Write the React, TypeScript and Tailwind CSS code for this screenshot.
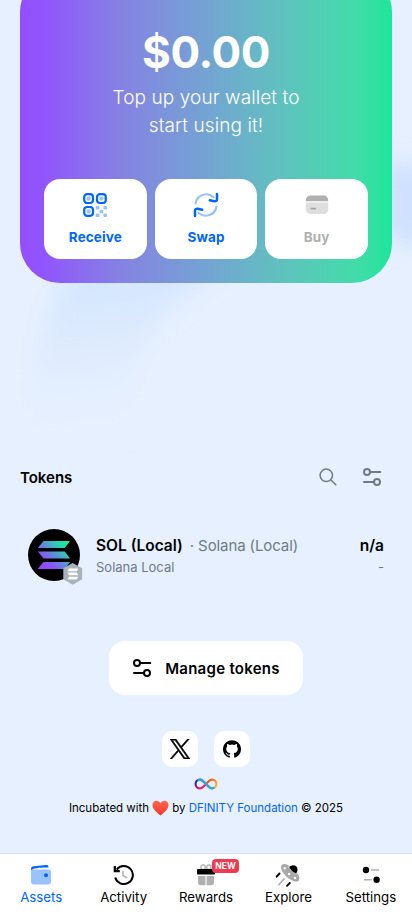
import React from "react";

const QrIcon = () => (
  <svg width="24" height="24" viewBox="0 0 24 24" fill="none">
    {[
      [1.2, 1.2],
      [14, 1.2],
      [1.2, 14],
    ].map(([x, y]) => (
      <g key={`${x}-${y}`}>
        <rect x={x} y={y} width="8.8" height="8.8" rx="3" stroke="#0066ff" strokeWidth="2.2" />
        <rect x={x + 2.4} y={y + 2.4} width="4" height="4" rx="1" fill="#99c2ff" />
      </g>
    ))}
    {[
      [12.8, 13],
      [20.4, 13],
      [16.6, 16.8],
      [12.8, 20.4],
      [20.4, 20.4],
    ].map(([x, y]) => (
      <rect key={`${x}-${y}`} x={x} y={y} width="3.6" height="3.6" rx="0.9" fill="#99c2ff" />
    ))}
  </svg>
);

const SwapIcon = () => (
  <svg width="26" height="26" viewBox="0 0 26 26" fill="none" strokeLinecap="round" strokeLinejoin="round" strokeWidth="2.2">
    <path d="M2.500 11.500A10.800 10.800 0 0 1 20.500 5.200" stroke="#99c2ff" />
    <path d="M23.500 14.500A10.800 10.800 0 0 1 5.500 20.800" stroke="#99c2ff" />
    <path d="M24 2v5q0 2.600-2.600 2.300l-4.600-1" stroke="#0066ff" strokeWidth="2.500" />
    <path d="M2 24v-5q0-2.600 2.600-2.300l4.600 1" stroke="#0066ff" strokeWidth="2.500" />
  </svg>
);

const CardIcon = () => (
  <svg width="24" height="20" viewBox="0 0 24 20">
    <path d="M.8 7.4h22.4v7.2a4.4 4.4 0 0 1-4.4 4.4H5.2a4.4 4.4 0 0 1-4.4-4.4z" fill="#dedede" />
    <path d="M.8 6.2V5A4.4 4.4 0 0 1 5.2.6h13.6A4.4 4.4 0 0 1 23.2 5v1.2z" fill="#b0b0b0" />
    <rect x="5.5" y="12.8" width="5.5" height="1.7" rx=".8" fill="#a3a3a3" />
  </svg>
);

const SlidersIcon = ({ className }: { className?: string }) => (
  <svg className={className} width="20" height="20" viewBox="0 0 20 20" fill="none" stroke="currentColor" strokeWidth="2" strokeLinecap="round">
    <circle cx="5" cy="5" r="3" />
    <path d="M8.5 5H18.3M2 15h9.5" />
    <circle cx="15" cy="15" r="3" />
  </svg>
);

const SearchIcon = () => (
  <svg width="18" height="18" viewBox="0 0 18 18" fill="none" stroke="#6d7b87" strokeWidth="1.5" strokeLinecap="round">
    <circle cx="7.3" cy="7.3" r="6.2" />
    <path d="m12 12 4.8 4.8" />
  </svg>
);

const SolanaToken = () => (
  <svg width="56" height="57" viewBox="0 0 56 57">
    <defs>
      <linearGradient id="sol" x1="12" y1="40" x2="40" y2="12" gradientUnits="userSpaceOnUse">
        <stop offset="0" stopColor="#9b42ff" />
        <stop offset=".28" stopColor="#8a55f4" />
        <stop offset=".55" stopColor="#5497d5" />
        <stop offset=".78" stopColor="#2bd5ad" />
        <stop offset="1" stopColor="#13f19a" />
      </linearGradient>
    </defs>
    <circle cx="26" cy="26" r="26" fill="#000" />
    <path
      d="M15.5 12H42l-5.2 6.9H9.8zM9.8 22.5h27l5.2 7H15.5zM15.5 33.1H42L36.8 40h-27z"
      fill="url(#sol)"
    />
    <path d="m44.700 34 9.400 5.300v11l-9.400 5.400-9.400-5.400v-11z" fill="#a9b2b9" />
    <path d="M41 39.500h9.400l-1.700 2.700h-9.300zM39.400 43.600h9.300l1.700 2.700H41zM41 47.700h9.400l-1.700 2.700h-9.300z" fill="#fff" />
  </svg>
);

const XIcon = () => (
  <svg width="20" height="20" viewBox="0 0 24 24">
    <path d="M14.258 10.152 23.176 0h-2.113l-7.747 8.813L7.133 0H0l9.352 13.328L0 23.973h2.113l8.176-9.309 6.531 9.309h7.133zm-2.895 3.293-.949-1.328L2.875 1.56h3.246l6.086 8.523.945 1.328 7.91 11.078h-3.246z" fill="#000" stroke="#000" strokeWidth=".7" />
  </svg>
);

const GithubIcon = () => (
  <svg width="18" height="18" viewBox="0 0 24 24">
    <path d="M12 .3a12 12 0 0 0-3.8 23.38c.6.12.83-.26.83-.57v-2.23c-3.34.73-4.04-1.42-4.04-1.42-.55-1.38-1.34-1.75-1.34-1.75-1.08-.74.09-.73.09-.73 1.2.09 1.84 1.24 1.84 1.24 1.07 1.83 2.81 1.3 3.5 1 .1-.78.42-1.31.76-1.61-2.67-.3-5.47-1.33-5.47-5.93 0-1.31.47-2.38 1.24-3.22-.14-.3-.54-1.52.1-3.18 0 0 1-.32 3.3 1.23a11.5 11.5 0 0 1 6 0c2.28-1.55 3.29-1.23 3.29-1.23.64 1.66.24 2.88.12 3.18a4.65 4.65 0 0 1 1.23 3.22c0 4.61-2.8 5.63-5.48 5.92.42.36.81 1.1.81 2.22v3.29c0 .31.21.69.82.57A12 12 0 0 0 12 .3" fill="#000" />
  </svg>
);

const InfinityLogo = () => (
  <svg width="24" height="12" viewBox="0 0 24 12" fill="none" strokeWidth="2.2" strokeLinecap="round">
    <defs>
      <linearGradient id="infLeft" x1="1" y1="3" x2="11" y2="9" gradientUnits="userSpaceOnUse">
        <stop offset=".2" stopColor="#522785" />
        <stop offset=".65" stopColor="#ed1e79" />
      </linearGradient>
      <linearGradient id="infRight" x1="13" y1="3" x2="23" y2="9" gradientUnits="userSpaceOnUse">
        <stop offset=".2" stopColor="#f15a24" />
        <stop offset=".9" stopColor="#fbb03b" />
      </linearGradient>
    </defs>
    <path d="M12 6C9.4 3 8 1.6 6 1.6A4.4 4.4 0 0 0 6 10.4C8 10.4 9.4 9 12 6" stroke="url(#infLeft)" />
    <path d="M12 6C14.6 3 16 1.6 18 1.6A4.4 4.4 0 0 1 18 10.4C16 10.4 14.6 9 12 6" stroke="url(#infRight)" />
    <path d="M4.500 2C7.500.900 9.300 3 12 6c2.700 3 4.500 5.100 7.500 4" stroke="#29abe2" />
  </svg>
);

const Heart = () => (
  <svg className="mx-[3px]" width="17" height="16" viewBox="0 0 17 16">
    <defs>
      <linearGradient id="heart" x1="0" y1="0" x2="0" y2="1">
        <stop offset="0" stopColor="#ff6550" />
        <stop offset="1" stopColor="#f23a2c" />
      </linearGradient>
    </defs>
    <path d="M8.5 15.5C5 12.8.5 9.2.5 5 .5 2.3 2.2.7 4.4.7c1.8 0 3.3.9 4.1 2.5C9.3 1.600 10.800.7 12.600.7c2.200 0 3.900 1.600 3.900 4.300 0 4.200-4.500 7.800-8 10.500z" fill="url(#heart)" />
  </svg>
);

const WalletIcon = () => (
  <svg width="22" height="22" viewBox="0 0 22 22">
    <path d="M1 6.400l2-.9h15.500A2.500 2.500 0 0 1 21 8v9.500a3 3 0 0 1-3 3H4a3 3 0 0 1-3-3z" fill="#99c2ff" />
    <path d="M1 6.200V5C1 3.200 2 2.500 3.700 2.300L16 1c1.500-.1 2.300.5 2.500 1.900v.7C12 3.600 5 3.600 1 6.200z" fill="#0066ff" />
    <circle cx="16" cy="11.300" r="2" fill="#0066ff" />
  </svg>
);

const HistoryIcon = () => (
  <svg width="22" height="22" viewBox="0 0 22 22" fill="none" strokeWidth="2">
    <path d="M3.700 5.600A9 9 0 1 1 2.200 13.500" stroke="#000" />
    <path d="M1.800 2v5.200h5" stroke="#000" strokeWidth="2.200" />
    <path d="M10 7v4.500l4.200 2.400" stroke="#b0b0b0" strokeWidth="1.500" />
  </svg>
);

const GiftIcon = () => (
  <svg width="20" height="22" viewBox="0 0 20 22">
    <rect x="5" y="1" width="4.200" height="4.500" rx="2" fill="none" stroke="#b0b0b0" strokeWidth="1.400" />
    <rect x="10.800" y="1" width="4.200" height="4.500" rx="2" fill="none" stroke="#b0b0b0" strokeWidth="1.400" />
    <path d="M2 12h7.400v9.300H5a3 3 0 0 1-3-3zM10.600 12H18v6.300a3 3 0 0 1-3 3h-4.400z" fill="#b0b0b0" />
    <rect x="1" y="5" width="18" height="5.500" rx="1" fill="#000" />
  </svg>
);

const UfoIcon = () => (
  <svg width="26" height="24" viewBox="0 0 26 24" fill="none" strokeLinecap="round">
    <g transform="rotate(43 15.500 9.500)">
      <ellipse cx="15.500" cy="10" rx="11.500" ry="5.400" fill="#a9a9a9" />
      <path d="M10.400 6.800a5.100 6 0 0 1 10.200 0q-5.100 2-10.200 0z" fill="#000" stroke="#fff" strokeWidth=".6" />
      <circle cx="8.300" cy="10.400" r="1.200" fill="#fff" />
      <circle cx="15.500" cy="11.600" r="1.300" fill="#fff" />
      <circle cx="22.500" cy="10.400" r="1.200" fill="#fff" />
    </g>
    <path d="m4.500 10.500-2.800 3.200M14.800 20l-2.800 2.800" stroke="#000" strokeWidth="1.900" />
    <path d="m9 16-5 5.500" stroke="#b0b0b0" strokeWidth="1.800" />
  </svg>
);

const SettingsIcon = () => (
  <svg width="20" height="18" viewBox="0 0 20 18">
    <circle cx="5" cy="4" r="3.200" fill="#000" />
    <circle cx="15.600" cy="13.700" r="3.200" fill="#000" />
    <path d="M10 4h8M3 13.700h7.600" stroke="#b0b0b0" strokeWidth="1.600" />
  </svg>
);

type ActionProps = { label: string; icon: React.ReactNode; color: string };

const Action = ({ label, icon, color }: ActionProps) => (
  <button className={`flex h-20 flex-1 flex-col items-center rounded-2xl bg-white pt-[13px] ${color}`}>
    <span className="flex h-[26px] items-center justify-center">{icon}</span>
    <span className="mt-[9px] text-[13.5px] leading-5 font-bold tracking-[0.1px]">{label}</span>
  </button>
);

type NavProps = { label: string; icon: React.ReactNode; color?: string; badge?: string };

const NavItem = ({ label, icon, color = "text-black", badge }: NavProps) => (
  <a className={`flex flex-1 flex-col items-center pt-[9px] ${color}`}>
    <span className="relative flex h-6 items-center justify-center">
      {icon}
      {badge && (
        <span className="absolute -top-1 left-[16px] flex h-[14px] w-[27px] items-center justify-center rounded bg-[#ef3a52] text-[8.5px] font-bold text-white">
          {badge}
        </span>
      )}
    </span>
    <span className="text-[13.25px] leading-[21px] whitespace-nowrap">{label}</span>
  </a>
);

export default function App() {
  return (
    <div className="relative isolate flex h-[915px] w-[412px] flex-col overflow-hidden bg-[#e6f0ff] font-[Inter,'Noto_Sans',sans-serif] text-black">
      <svg className="absolute inset-0 -z-10" width="412" height="915" viewBox="0 0 412 915">
        <defs>
          <linearGradient id="wash" x1="0" y1="270" x2="20" y2="450" gradientUnits="userSpaceOnUse">
            <stop offset="0" stopColor="#d1e5ff" />
            <stop offset=".4" stopColor="#dceafd" />
            <stop offset="1" stopColor="#e6f0ff" stopOpacity="0" />
          </linearGradient>
          <filter id="soft" x="-50%" y="-50%" width="200%" height="200%">
            <feGaussianBlur stdDeviation="11" />
          </filter>
        </defs>
        <path d="M75 260C40 320 20 390 35 455h98C122 360 145 310 235 262z" fill="url(#wash)" filter="url(#soft)" />
        <path d="M380 165q50-10 60 20v65q-40-5-60-20z" fill="#cfe1ff" filter="url(#soft)" />
      </svg>

      <section className="mx-5 -mt-7 flex h-[311px] shrink-0 flex-col items-center rounded-[40px] bg-[linear-gradient(90deg,#944dff_0%,#9058fa_8%,#8484e2_28%,#74a3d3_50%,#60c1bf_70%,#43dba9_90%,#1ee69c_100%)] px-6 pt-[55px] text-white">
        <h1 className="text-[44px] leading-[50px] font-bold tracking-[-0.4px]">$0.00</h1>
        <p className="mt-[7px] w-[220px] text-center text-[19px] leading-7 font-light tracking-[0.1px]">
          Top up your wallet to
          <br />
          start using it!
        </p>
        <div className="mt-[39px] flex w-full gap-2">
          <Action label="Receive" icon={<QrIcon />} color="text-[#0066ff]" />
          <Action label="Swap" icon={<SwapIcon />} color="text-[#0066ff]" />
          <Action label="Buy" icon={<CardIcon />} color="text-[#b0b0b0]" />
        </div>
      </section>

      <div className="mt-[182px] flex h-6 items-center pr-[30px] pl-5">
        <h2 className="flex-1 pt-0.5 text-[15px] font-semibold">Tokens</h2>
        <SearchIcon />
        <SlidersIcon className="ml-[25px] text-[#6d7b87]" />
      </div>

      <div className="mt-10 flex h-[57px] items-start px-7">
        <SolanaToken />
        <div className="mt-[5px] ml-3 flex-1">
          <div className="flex items-baseline gap-[7px] text-[15.5px] leading-6 whitespace-nowrap">
            <span className="font-semibold">SOL (Local)</span>
            <span className="text-[15px] tracking-[-0.1px] text-[#6d7b87]">· Solana (Local)</span>
          </div>
          <div className="-mt-px text-[13px] leading-5 text-[#6d7b87]">Solana Local</div>
        </div>
        <div className="mt-[5px] text-right">
          <div className="text-[15.5px] leading-6 font-semibold">n/a</div>
          <div className="-mt-px text-[13px] leading-5 text-[#6d7b87]">-</div>
        </div>
      </div>

      <button className="mt-[55px] flex h-[54px] w-[194px] shrink-0 items-center justify-center gap-[13px] self-center rounded-2xl bg-white">
        <SlidersIcon />
        <span className="pt-0.5 text-[15px] font-semibold tracking-[0.28px] whitespace-nowrap">Manage tokens</span>
      </button>

      <footer className="mt-9 flex flex-col items-center">
        <div className="flex gap-4">
          <a className="flex size-9 items-center justify-center rounded-[10px] bg-white"><XIcon /></a>
          <a className="flex size-9 items-center justify-center rounded-[10px] bg-white"><GithubIcon /></a>
        </div>
        <div className="mt-[11px]"><InfinityLogo /></div>
        <div className="mt-2 flex h-5 items-center text-[11.5px] whitespace-nowrap">
          <span className="pt-0.5">Incubated with</span>
          <Heart />
          <span className="pt-0.5">by <span className="text-[#0066ff]">DFINITY Foundation</span> © 2025</span>
        </div>
      </footer>

      <nav className="mt-auto flex h-[62px] shrink-0 border-t border-[#d9e2ec] bg-white">
        <NavItem label="Assets" icon={<WalletIcon />} color="text-[#0066ff]" />
        <NavItem label="Activity" icon={<HistoryIcon />} />
        <NavItem label="Rewards" icon={<GiftIcon />} badge="NEW" />
        <NavItem label="Explore" icon={<UfoIcon />} />
        <NavItem label="Settings" icon={<SettingsIcon />} />
      </nav>
    </div>
  );
}
